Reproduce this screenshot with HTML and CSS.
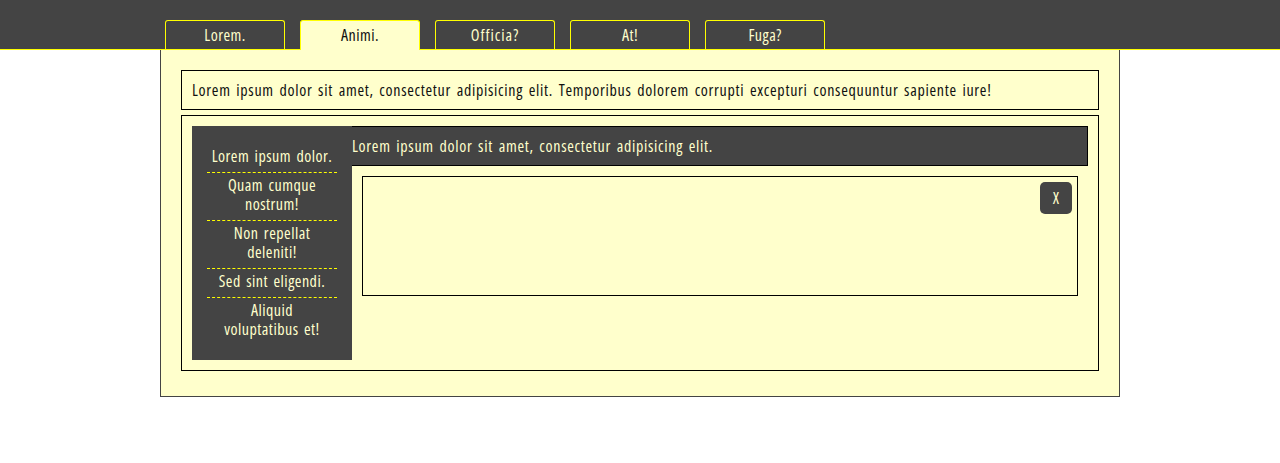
FILE: index.html
```
<!DOCTYPE html>
<html lang="en">
<head>
<meta charset="utf-8">
<title>Tabs</title>
<link rel="stylesheet" href="styles.css">
</head>
<body>
<header class="header">
  <nav class="tabs">
    <a class="tab">Lorem.</a>
    <a class="tab tab-active">Animi.</a>
    <a class="tab tab-wide">Officia?</a>
    <a class="tab">At!</a>
    <a class="tab">Fuga?</a>
  </nav>
</header>
<main class="page">
  <p class="intro">Lorem ipsum dolor sit amet, consectetur adipisicing elit. Temporibus dolorem corrupti excepturi consequuntur sapiente iure!</p>
  <section class="panel">
    <ul class="menu">
      <li class="item">Lorem ipsum dolor.</li>
      <li class="item">Quam cumque<br>nostrum!</li>
      <li class="item">Non repellat<br>deleniti!</li>
      <li class="item">Sed sint eligendi.</li>
      <li class="item">Aliquid<br>voluptatibus et!</li>
    </ul>
    <div class="content">
      <p class="bar">Lorem ipsum dolor sit amet, consectetur adipisicing elit.</p>
      <div class="box"><button class="close">X</button></div>
    </div>
  </section>
</main>
</body>
</html>
```
FILE: styles.css
```
* { box-sizing: border-box; margin: 0; padding: 0; }
body {
  background: #fff;
  color: #111;
  font: 16px/19px "Open Sans", "Liberation Sans", sans-serif;
  font-stretch: 75%;
  letter-spacing: 0.7px;
  word-spacing: 2px;
}
.header { height: 50px; background: #444; border-bottom: 1px solid #ff0; }
.tabs { display: flex; gap: 15px; width: 960px; margin: 0 auto; padding: 20px 5px 0; }
.tab {
  width: 120px;
  height: 29px;
  padding-top: 5px;
  border: 1px solid #ff0;
  border-bottom: 0;
  border-radius: 3px 3px 0 0;
  color: #ffc;
  letter-spacing: 0.45px;
  text-align: center;
}
.tab-active { height: 30px; background: #ffc; color: #111; }
.tab-wide { letter-spacing: 1px; }
.page {
  width: 960px;
  height: 347px;
  margin: 0 auto;
  padding: 20px;
  background: #ffc;
  border: 1px solid #444;
  border-top: 0;
}
.intro { height: 40px; padding: 10px; border: 1px solid #000; white-space: nowrap; }
.panel { display: flex; height: 256px; margin-top: 5px; padding: 10px; border: 1px solid #000; }
.menu {
  width: 160px;
  height: 234px;
  padding: 18px 15px;
  background: #444;
  color: #ffc;
  letter-spacing: 0.48px;
  list-style: none;
  text-align: center;
}
.item { padding: 3px 0 6px; border-bottom: 1px dashed #ff0; }
.item:last-child { border-bottom: 0; }
.content { flex: 1; }
.bar { height: 40px; padding: 10px 0; background: #444; border: 1px solid #000; border-left: 0; color: #ffc; }
.box { display: flex; justify-content: flex-end; height: 120px; margin: 10px; padding: 5px; border: 1px solid #000; }
.close { width: 32px; height: 32px; border: 0; border-radius: 5px; background: #444; color: #ffc; font: inherit; }
```
